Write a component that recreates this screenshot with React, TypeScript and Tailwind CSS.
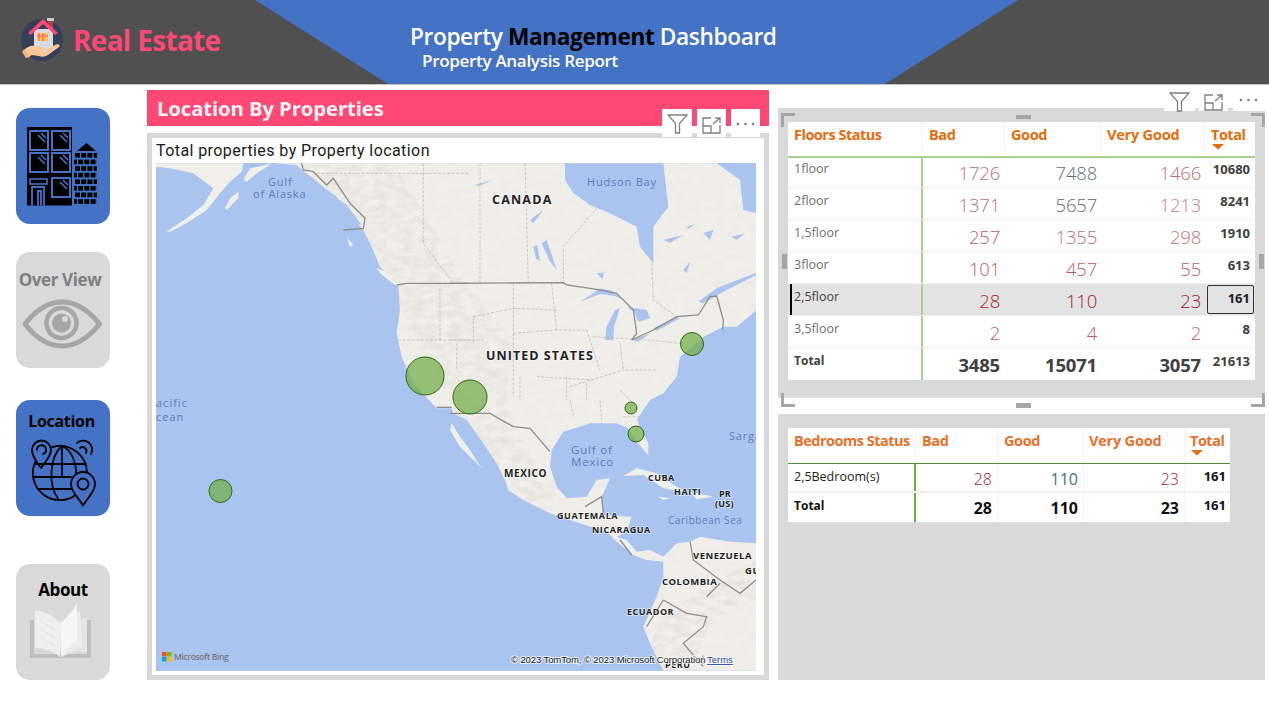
import React from "react";

type P = [number, number];
const at = (ox: number, oy: number, a: P[]) => a.map(([x, y]) => `${x / 3 + ox},${y / 3 + oy}`).join(" ");
const z5 = (a: P[]) => at(150, 130, a);
const z6 = (a: P[]) => at(450, 130, a);
const z7 = (a: P[]) => at(450, 400, a);

const mainland =
  z5([[370,100],[440,105],[470,130],[520,170],[560,200],[600,250],[640,300],[660,340],[690,410],[745,470],[750,540],[740,610],[755,680],[790,760],[860,835],[905,835]]) + " " +
  z7([[10,40],[50,60],[100,130],[140,190],[165,240],[175,270],[220,300],[300,340],[390,370],[470,395],[500,425],[550,465],[590,480],[640,485],[640,530],[620,590],[580,680],[600,730],[640,812],[920,812],[920,430],[840,425],[750,410],[720,425],[680,430],[640,470],[600,450],[560,455],[530,420],[500,410],[530,395],[545,350],[460,345],[455,290],[480,235],[440,240],[410,290],[350,295],[320,260],[300,200],[305,150],[340,95],[420,70],[500,70],[535,85],[560,125],[595,165],[595,130],[560,60],[600,0]]) + " " +
  z6([[640,790],[680,740],[690,680],[760,620],[820,590],[860,590],[920,540],[920,250],[880,240],[870,150],[800,100]]);

const lands = [
  z5([[50,305],[110,265],[160,225],[190,175],[130,130],[60,115],[18,110],[18,100],[280,100],[275,125],[240,155],[210,190],[170,240],[110,280],[60,305]]),
  z5([[225,235],[240,205],[265,185],[265,205],[245,225],[230,240]]),
  z5([[280,150],[300,115],[345,105],[365,100],[345,115],[320,130],[290,155]]),
  z5([[680,415],[720,430],[760,470],[735,465],[690,430]]),
  z5([[590,320],[610,345],[600,350]]),
  z7([[5,70],[30,110],[60,150],[95,205],[70,180],[30,140],[0,90]]),
  z7([[520,228],[560,205],[620,220],[680,260],[720,280],[640,265],[580,225]]),
  z7([[720,275],[790,290],[740,298]]),
  z7([[625,290],[660,295],[640,300]]),
];
const waters = [
  z6([[345,100],[640,100],[655,230],[610,290],[610,400],[570,350],[560,290],[480,250],[420,225],[370,190],[345,150]]),
  z6([[745,515],[800,475],[918,428],[918,436],[830,480],[760,520]]),
  z6([[390,515],[430,490],[450,475],[485,482],[525,512],[495,498],[450,492]]),
  z6([[465,630],[470,590],[495,540],[510,535],[492,590],[490,630]]),
  z6([[530,530],[590,540],[600,565],[565,575],[552,545]]),
  z6([[545,630],[600,610],[615,600],[565,635]]),
  z6([[610,595],[680,560],[690,565],[620,602]]),
  z6([[275,340],[290,330],[320,420],[300,395]]),
  z6([[250,350],[262,345],[270,395],[258,385]]),
  z6([[75,165],[130,150],[85,168]]),
  z6([[240,270],[280,240],[250,280]]),
  z6([[640,330],[700,315],[660,338]]),
  z6([[710,290],[735,282],[715,296]]),
  z6([[760,310],[790,300],[780,330]]),
  z6([[845,320],[885,310],[860,330]]),
  z6([[700,420],[720,395],[710,430]]),
  z6([[440,430],[462,428],[458,448]]),
  z5([[570,210],[590,225],[620,265],[635,285],[600,270]]),
];
const borders = [
  z5([[740,465],[770,460],[960,460]]),
  z6([[0,460],[340,458],[350,465],[440,478],[500,490],[550,540],[560,610],[545,630],[610,600],[680,560],[745,555],[780,500],[800,498],[820,570],[818,600]]),
  z5([[455,100],[460,120],[490,125],[530,165],[550,145],[600,220],[645,265],[640,295],[580,300]]),
  z7([[0,40],[120,40],[190,80],[240,85],[300,155]]),
  z5([[860,832],[905,832]]),
  z7([[405,320],[455,290],[460,340]]),
  z7([[510,420],[545,465]]),
  z7([[720,425],[730,480],[810,540],[870,580],[918,540]]),
  z7([[640,600],[710,640],[770,650],[760,680],[700,730],[760,800]]),
  z7([[590,680],[640,600]]),
  z7([[770,590],[810,550]]),
];
const dashed = [
  z6([[90,100],[90,460]]), z6([[225,100],[235,460]]), z6([[340,460],[340,350],[440,235]]), z6([[605,400],[610,510],[680,560]]),
  z5([[820,100],[820,340],[910,460]]), z5([[500,130],[960,130]]),
  z6([[190,460],[190,800]]), z6([[70,560],[190,535],[320,540]]), z6([[305,460],[320,600],[410,600]]), z6([[190,610],[320,600]]),
  z6([[0,630],[100,630]]), z6([[260,740],[430,750]]), z6([[20,640],[20,720]]), z6([[410,600],[450,720]]),
  z6([[430,620],[590,630],[690,640]]), z6([[510,640],[520,720]]), z6([[360,770],[520,720],[620,720]]),
  z5([[870,460],[870,630]]), z5([[745,630],[960,630]]), z6([[70,560],[70,640]]), z6([[210,740],[210,810]]),
  z6([[350,740],[350,810]]), z6([[410,760],[410,810]]), z6([[510,780],[560,830]]),
  z7([[360,0],[370,50]]), z7([[450,0],[455,60]]), z7([[520,50],[590,50]]),
];
const rockies = "300,165 395,165 470,290 515,340 505,400 525,445 565,505 530,505 462,425 402,310 360,230";
const andes = "640,671 660,620 700,590 756,560 756,600 710,625 690,671";

const MapLabel = ({ x, y, t, c, ls = 0.8, s = 11, b = false }: { x: number; y: number; t: string; c?: boolean; ls?: number; s?: number; b?: boolean }) => (
  <text x={x} y={y} fontFamily="Open Sans, sans-serif" fontSize={s} fontWeight={b ? 700 : 400} letterSpacing={ls} fill={c ? "#5f7cb3" : "#222"} stroke={c ? "none" : "#ffffff"} strokeOpacity={0.55} strokeWidth={c ? 0 : 1.5} paintOrder="stroke">{t}</text>
);

function MapArt() {
  const bubbles: [number, number, number][] = [[425,376,19],[470,397,17],[692,344,11.5],[631,408,6],[636,434,8],[220.5,491,11.5]];
  return (
    <svg className="block w-[600px] h-[508px]" viewBox="156 163 600 508">
      <defs>
        <filter id="tex" x="0" y="0" width="100%" height="100%">
          <feTurbulence type="fractalNoise" baseFrequency="0.08 0.16" numOctaves="3" seed="4" />
          <feColorMatrix values="0 0 0 0 0.62  0 0 0 0 0.6  0 0 0 0 0.56  0.9 0 0 0 -0.3" />
        </filter>
        <filter id="soft"><feGaussianBlur stdDeviation="0.4" /></filter>
        <clipPath id="landclip"><polygon points={mainland} /></clipPath>
        <clipPath id="mtnclip"><polygon points={rockies} /><polygon points={andes} /></clipPath>
      </defs>
      <rect x="156" y="163" width="600" height="508" fill="#a9c5ef" />
      <g filter="url(#soft)">
        <polygon points={mainland} fill="#f1efea" />
        {lands.map((p, i) => <polygon key={i} points={p} fill="#f1efea" />)}
        <g clipPath="url(#landclip)">
          <rect x="156" y="163" width="600" height="508" filter="url(#tex)" opacity="0.18" />
          <g clipPath="url(#mtnclip)">
            <rect x="156" y="163" width="600" height="508" filter="url(#tex)" opacity="0.6" />
          </g>
        </g>
        {waters.map((p, i) => <polygon key={i} points={p} fill="#a9c5ef" />)}
        {dashed.map((p, i) => <polyline key={i} points={p} fill="none" stroke="#bab7b0" strokeWidth="0.7" strokeDasharray="3 1.5" />)}
        {borders.map((p, i) => <polyline key={i} points={p} fill="none" stroke="#8f8e8a" strokeWidth="1.3" />)}
      </g>
      <MapLabel x={268} y={186} t="Gulf" c />
      <MapLabel x={253} y={198} t="of Alaska" c />
      <MapLabel x={587} y={186} t="Hudson Bay" c />
      <MapLabel x={492} y={204} t="CANADA" s={12.5} b ls={1.2} />
      <MapLabel x={486} y={360} t="UNITED STATES" s={12.5} b ls={1.05} />
      <MapLabel x={156} y={407} t="acific" c ls={1} />
      <MapLabel x={156} y={421} t="cean" c ls={1} />
      <MapLabel x={571} y={454} t="Gulf of" c s={11.5} />
      <MapLabel x={571} y={466} t="Mexico" c s={11.5} />
      <MapLabel x={729} y={440} t="Sarga" c />
      <MapLabel x={504} y={477} t="MEXICO" b s={10} ls={0.6} />
      <MapLabel x={648} y={481} t="CUBA" b s={9} ls={0.5} />
      <MapLabel x={674} y={495} t="HAITI" b s={9} ls={0.6} />
      <MapLabel x={719} y={497} t="PR" b s={9} ls={0.2} />
      <MapLabel x={715} y={507} t="(US)" b s={9} ls={0.2} />
      <MapLabel x={668} y={524} t="Caribbean Sea" c s={10} ls={0.55} />
      <MapLabel x={557} y={519} t="GUATEMALA" b s={9} ls={0.6} />
      <MapLabel x={592} y={533} t="NICARAGUA" b s={9} ls={0.55} />
      <MapLabel x={693} y={559} t="VENEZUELA" b s={9.5} ls={0.5} />
      <MapLabel x={745} y={574} t="GU" b s={9.5} ls={0.5} />
      <MapLabel x={662} y={585} t="COLOMBIA" b s={9.5} ls={0.45} />
      <MapLabel x={627} y={615} t="ECUADOR" b s={9} ls={0.5} />
      <MapLabel x={665} y={668} t="PERU" b s={9} ls={0.5} />
      {bubbles.map(([x, y, r], i) => (
        <circle key={i} cx={x} cy={y} r={r} fill="#70ad47" fillOpacity="0.72" stroke="#2c6a12" strokeWidth="1" />
      ))}
      <g>
        <rect x="162" y="652" width="4.500" height="4.500" fill="#f25022" />
        <rect x="167" y="652" width="4.500" height="4.500" fill="#7fba00" />
        <rect x="162" y="657" width="4.500" height="4.500" fill="#00a4ef" />
        <rect x="167" y="657" width="4.500" height="4.500" fill="#ffb900" />
        <text x="174" y="660" fontFamily="Open Sans, sans-serif" fontSize="8.500" fontWeight="600" letterSpacing="-0.35" fill="#777">Microsoft Bing</text>
      </g>
      <text x="511" y="663" fontFamily="Liberation Sans, sans-serif" fontSize="9.500" letterSpacing="-0.1" fill="#222" stroke="#fff" strokeWidth="2" strokeOpacity="0.7" paintOrder="stroke">© 2023 TomTom, © 2023 Microsoft Corporation</text>
      <line x1="703" y1="655" x2="703" y2="664" stroke="#999" strokeWidth="0.7" />
      <text x="707" y="663" fontFamily="Liberation Sans, sans-serif" fontSize="9.500" fill="#2a4db0" textDecoration="underline" stroke="#fff" strokeWidth="2" strokeOpacity="0.6" paintOrder="stroke">Terms</text>
    </svg>
  );
}

function Logo() {
  return (
    <svg className="w-[46px] h-[46px] shrink-0" viewBox="19 17 46 46">
      <circle cx="42" cy="40" r="21" fill="#34405a" />
      <rect x="47" y="18" width="7" height="3" fill="#c9c9c9" />
      <rect x="48" y="21" width="5" height="7" fill="#a5483f" />
      <rect x="34" y="29" width="19" height="22" fill="#d9dbe0" />
      <polygon points="28,33 43,19 58,33 55,35 43,24 31,35" fill="#ff4874" />
      <rect x="37" y="33" width="11" height="8" fill="#ffc34d" />
      <path d="M39 33v8M43 33v8M37 36h11" stroke="#ff4874" strokeWidth="1" fill="none" />
      <path d="M24 50c3-3 7-5 11-4l8 1c3 0 3 3 0 3l-5 0 6 1 11-6c3-2 6 0 4 2l-11 8c-3 2-6 2-9 1l-7-1-6 3z" fill="#fcc79a" />
      <path d="M24 49l6 8-4 1-4-6z" fill="#f3b27e" />
    </svg>
  );
}

function BuildingIcon() {
  const bricks: React.ReactNode[] = [];
  for (let r = 0; r < 8; r++) {
    const y = 153 + r * 6.6;
    const off = r % 2 === 0 ? 0 : -3;
    for (let c = 0; c < 5; c++) {
      const x = 75 + off + c * 6.2;
      const x0 = Math.max(x, 74);
      const x1 = Math.min(x + 5, 97);
      if (x1 > x0) bricks.push(<rect key={`${r}-${c}`} x={x0} y={y} width={x1 - x0} height="4.600" fill="#000" />);
    }
  }
  const win = (x: number, y: number) => (
    <g key={`${x}-${y}`}>
      <rect x={x} y={y} width="18" height="19" fill="#000" stroke="#4472c4" strokeWidth="2" />
      <path d={`M${x + 8} ${y + 4}l7 7M${x + 11} ${y + 2}l5 5`} stroke="#4472c4" strokeWidth="1.600" />
    </g>
  );
  return (
    <svg className="block w-[94px] h-[116px]" viewBox="16 108 94 116">
      <rect x="27" y="127" width="45" height="78.500" fill="#000" />
      {win(30, 131)}{win(52, 131)}{win(30, 153)}{win(52, 153)}{win(52, 178)}
      <rect x="30" y="179" width="17" height="5" fill="#000" stroke="#4472c4" strokeWidth="1.600" />
      <path d="M32 205.500V187h12v18.500M38 205.500V191h3v14.500" stroke="#4472c4" strokeWidth="1.800" fill="none" />
      <polygon points="86.500,143 77,151 96,151" fill="#000" />
      {bricks}
    </svg>
  );
}

function EyeIcon() {
  return (
    <svg className="block w-[94px] h-[78px]" viewBox="16 290 94 78">
      <path d="M25 324Q42 302 62 302Q82 302 99.500 324Q82 346 62 346Q42 346 25 324Z" fill="none" stroke="#a6a6a6" strokeWidth="5" strokeLinejoin="round" />
      <circle cx="61.500" cy="323" r="15" fill="none" stroke="#a6a6a6" strokeWidth="4.500" />
      <circle cx="61.500" cy="323" r="9.500" fill="#a6a6a6" />
      <circle cx="65" cy="319" r="3" fill="#d9d9d9" />
    </svg>
  );
}

function GlobeIcon() {
  return (
    <svg className="block w-[94px] h-[84px]" viewBox="16 432 94 84">
      <g fill="none" stroke="#000" strokeWidth="1.800" strokeLinecap="round" strokeLinejoin="round">
        <path d="M52 447.200A27 27 0 0 1 87 473M36 460.500A27 27 0 0 0 77 494" />
        <path d="M62 446C50 456 47 485 59 500M62 446C72 450 76 463 76 473" />
        <path d="M35 464H86M33 477H71M38 489H74M62 446V475" />
        <path d="M41 468C36 461 32 456 32 450A9.500 9.500 0 0 1 51 450C51 456 46 461 41 468Z" />
        <path d="M37 450A4.500 4.500 0 1 1 43 454" />
        <path d="M77 443A9 9 0 0 1 91 454" />
        <path d="M80 448A4 4 0 0 1 86 453" />
        <path d="M83 505.500C78 497 71 492 71 484A12 12 0 0 1 95 484C95 492 88 497 83 505.500Z" fill="#4472c4" />
        <circle cx="83" cy="484" r="5.500" />
      </g>
    </svg>
  );
}

function BookIcon() {
  return (
    <svg className="block w-[94px] h-[80px]" viewBox="16 600 94 80">
      <path d="M30 620h4v34h53v-34h4v38H30z" fill="#bfbfbf" />
      <path d="M87 617L87 652Q73 651 61 657L80 620Z" fill="#e4e4e4" />
      <path d="M80 610L82 647Q71 650 61 657L74 620Z" fill="#ededed" />
      <path d="M35 610Q50 612 60 623V657Q50 648 35 648Z" fill="#eeeeee" />
      <path d="M60 623Q70 616 77 603V640Q69 645 61 657Z" fill="#f6f6f6" />
      <path d="M41 622Q49 625 55 630M41 630Q49 633 55 638M41 638Q49 641 55 646" stroke="#dedede" strokeWidth="1" fill="none" />
    </svg>
  );
}

const Funnel = () => (
  <svg width="21" height="20" viewBox="0 0 21 20" fill="none" stroke="#808080" strokeWidth="1.300">
    <path d="M1 1h19l-7.500 8.500V19h-4V9.500z" strokeLinejoin="miter" />
  </svg>
);
const Focus = () => (
  <svg width="19" height="17" viewBox="0 0 19 17" fill="none" stroke="#808080" strokeWidth="1.300">
    <path d="M9 1H1v15h17V8M1 9h8v7M11 7l7-6M13 1h5v5" />
  </svg>
);
const Dots = () => (
  <svg width="19" height="6" viewBox="0 0 19 6" fill="#808080"><circle cx="2" cy="3" r="1.300" /><circle cx="9.500" cy="3" r="1.300" /><circle cx="17" cy="3" r="1.300" /></svg>
);
const Caret = () => (
  <svg width="12" height="6" viewBox="0 0 12 6" className="block"><polygon points="0,0 12,0 6,5.500" fill="#e46c0a" /></svg>
);

const rose = "text-[#c05a68]";
const slate = "text-[#5f6f78]";
const grey = "text-[#6a6a6a]";

type Row = { label: string; v: [string, string, string]; c: [string, string, string]; t: string; sel?: boolean };
const floorRows: Row[] = [
  { label: "1floor", v: ["1726", "7488", "1466"], c: ["text-[#b8707a]", slate, "text-[#b8707a]"], t: "10680" },
  { label: "2floor", v: ["1371", "5657", "1213"], c: ["text-[#b8707a]", grey, "text-[#c08088]"], t: "8241" },
  { label: "1,5floor", v: ["257", "1355", "298"], c: [rose, "text-[#b8707a]", "text-[#c0707c]"], t: "1910" },
  { label: "3floor", v: ["101", "457", "55"], c: [rose, rose, rose], t: "613" },
  { label: "2,5floor", v: ["28", "110", "23"], c: ["text-[#a5182e]", "text-[#a5182e]", "text-[#a5182e]"], t: "161", sel: true },
  { label: "3,5floor", v: ["2", "4", "2"], c: [rose, rose, rose], t: "8" },
];
const cellNum = "flex justify-end text-[18.500px] font-light leading-[24px] pr-[4px] tracking-[-0.2px]";

function FloorsTable() {
  const sep = "border-r border-[#f4f4f4]";
  return (
    <div className="w-[467px] bg-white font-['Open_Sans',sans-serif]">
      <div className="flex h-[36px] border-b-2 border-[#a9d08e] text-[14.500px] font-bold text-[#e46c0a] leading-[24px] tracking-[-0.4px]">
        <div className={`w-[135px] pl-[6px] pt-[1px] tracking-[-0.5px] ${sep}`}>Floors Status</div>
        <div className={`w-[82px] pl-[6px] pt-[1px] ${sep}`}>Bad</div>
        <div className={`w-[96px] pl-[6px] pt-[1px] ${sep}`}>Good</div>
        <div className={`w-[104px] pl-[6px] pt-[1px] tracking-[-0.2px] ${sep}`}>Very Good</div>
        <div className="w-[50px] pl-[6px] pt-[1px] tracking-[-0.5px]">
          <div className="h-[21px]">Total</div>
          <div className="ml-[1px]"><Caret /></div>
        </div>
      </div>
      {floorRows.map((r, i) => (
        <div key={r.label} className={`relative flex border-b border-[#f0f0f0] ${i === 0 ? "h-[30px]" : "h-[32px]"} ${r.sel ? "bg-[#e3e3e3]" : ""}`}>
          {r.sel && <div className="absolute left-[2px] top-0 bottom-0 w-[2px] bg-black" />}
          <div className={`w-[135px] border-r-2 border-[#a9d08e] pl-[6px] ${i === 0 ? "pt-[1px]" : "pt-[3px]"} text-[12.500px] leading-[20px] ${r.sel ? "text-[#444]" : "text-[#6e6e6e]"}`}>{r.label}</div>
          <div className={`w-[82px] ${cellNum} ${i === 0 ? "pt-[3px]" : "pt-[5px]"} pr-[5px] ${r.c[0]}`}>{r.v[0]}</div>
          <div className={`w-[96px] ${cellNum} ${i === 0 ? "pt-[3px]" : "pt-[5px]"} ${r.c[1]}`}>{r.v[1]}</div>
          <div className={`w-[104px] ${cellNum} ${i === 0 ? "pt-[3px]" : "pt-[5px]"} ${r.c[2]}`}>{r.v[2]}</div>
          {r.sel ? (
            <div className="ml-[2px] mt-[1px] w-[47px] h-[29px] flex justify-end border border-[#333] rounded-[2px] pr-[3px] pt-[2px] text-[13px] font-bold leading-[20px] text-[#222]">{r.t}</div>
          ) : (
            <div className={`w-[50px] flex justify-end pr-[5px] ${i === 0 ? "pt-[1px]" : "pt-[3px]"} text-[13px] font-bold leading-[20px] text-[#404040]`}>{r.t}</div>
          )}
        </div>
      ))}
      <div className="flex h-[32px]">
        <div className="w-[135px] border-r-2 border-[#a9d08e] pl-[6px] pt-[3px] text-[12px] font-bold leading-[20px] text-[#404040]">Total</div>
        <div className={`w-[82px] ${cellNum} pt-[5px] !font-bold text-[#404040] pr-[5px]`}>3485</div>
        <div className={`w-[96px] ${cellNum} pt-[5px] !font-bold text-[#404040]`}>15071</div>
        <div className={`w-[104px] ${cellNum} pt-[5px] !font-bold text-[#404040]`}>3057</div>
        <div className="w-[50px] flex justify-end pr-[5px] pt-[3px] text-[13px] font-bold leading-[20px] text-[#404040]">21613</div>
      </div>
    </div>
  );
}

function BedroomsTable() {
  const sep = "border-r border-[#f4f4f4]";
  const n = "flex justify-end pr-[5px] pt-[3px] leading-[24px] border-r border-[#f4f4f4] text-[16px]";
  return (
    <div className="w-[442px] bg-white font-['Open_Sans',sans-serif]">
      <div className="flex h-[36px] border-b border-[#4e8f2e] text-[14.500px] font-bold text-[#e8702a] leading-[24px] tracking-[-0.4px]">
        <div className={`w-[128px] pl-[6px] pt-[1px] whitespace-nowrap tracking-[-0.5px] ${sep}`}>Bedrooms Status</div>
        <div className={`w-[82px] pl-[6px] pt-[1px] ${sep}`}>Bad</div>
        <div className={`w-[86px] pl-[6px] pt-[1px] ${sep}`}>Good</div>
        <div className={`w-[101px] pl-[5px] pt-[1px] tracking-[-0.2px] ${sep}`}>Very Good</div>
        <div className="w-[45px] pl-[5px] pt-[1px] tracking-[-0.5px]">
          <div className="h-[21px]">Total</div>
          <div className="ml-[1px]"><Caret /></div>
        </div>
      </div>
      <div className="flex h-[29px] border-b-2 border-[#f0f0f0]">
        <div className="w-[128px] border-r-2 border-[#70ad47] pl-[6px] pt-[3px] text-[12.500px] leading-[20px] text-[#222]">2,5Bedroom(s)</div>
        <div className={`w-[82px] ${n} font-light text-[#a5182e]`}>28</div>
        <div className={`w-[86px] ${n} font-normal text-[#3f7080]`}>110</div>
        <div className={`w-[101px] ${n} font-light text-[#a5182e]`}>23</div>
        <div className="w-[45px] flex justify-end pr-[4px] text-[13px] font-bold leading-[24px] text-[#111]">161</div>
      </div>
      <div className="flex h-[29px]">
        <div className="w-[128px] border-r-2 border-[#70ad47] pl-[6px] pt-[3px] text-[12px] font-bold leading-[20px] text-[#111]">Total</div>
        <div className={`w-[82px] ${n} font-bold text-[#111]`}>28</div>
        <div className={`w-[86px] ${n} font-bold text-[#111]`}>110</div>
        <div className={`w-[101px] ${n} font-bold text-[#111]`}>23</div>
        <div className="w-[45px] flex justify-end pr-[4px] text-[13px] font-bold leading-[24px] text-[#111]">161</div>
      </div>
    </div>
  );
}

const Corner = ({ pos, d }: { pos: string; d: string }) => (
  <svg className={`absolute w-[14px] h-[14px] ${pos}`} viewBox="0 0 14 14"><path d={d} fill="none" stroke="#a6a6a6" strokeWidth="3" /></svg>
);

const navText = "h-[22px] flex items-center justify-center font-bold leading-none";

export default function App() {
  return (
    <div className="w-[1269px] h-[711px] overflow-hidden bg-white flex flex-col font-['Open_Sans',sans-serif]">
      <header className="relative h-[85px] shrink-0 bg-[#505050] border-b border-[#c4c4c4]">
        <div className="absolute inset-x-0 top-0 h-[84px] bg-[#4472c4] [clip-path:polygon(255px_0,1018px_0,885px_84px,388px_84px)]" />
        <div className="relative flex items-center h-[84px]">
          <div className="flex items-center ml-[19px] w-[391px] -mt-[4px]">
            <Logo />
            <span className="ml-[8px] text-[28px] font-bold leading-none text-[#ff4874] tracking-[-0.7px]">Real Estate</span>
          </div>
          <div className="mt-[9px] font-semibold">
            <div className="text-[22.700px] leading-[28px] text-white tracking-[-0.4px] whitespace-nowrap">
              Property <span className="text-black font-bold">Management</span> Dashboard
            </div>
            <div className="ml-[12px] text-[17px] leading-[20px] text-white tracking-[-0.3px]">Property Analysis Report</div>
          </div>
        </div>
      </header>

      <div className="flex flex-1">
        <aside className="w-[147px] shrink-0 pl-[16px] pt-[23px] flex flex-col">
          <div className="w-[94px] h-[116px] rounded-[14px] bg-[#4472c4] overflow-hidden"><BuildingIcon /></div>
          <div className="mt-[28px] w-[94px] h-[116px] rounded-[14px] bg-[#d9d9d9] pt-[16px] overflow-hidden">
            <div className={`${navText} text-[#7f7f7f] text-[17px] tracking-[-0.4px] pr-[6px] whitespace-nowrap`}>Over View</div>
            <EyeIcon />
          </div>
          <div className="mt-[32px] w-[94px] h-[116px] rounded-[14px] bg-[#4472c4] pt-[10px] overflow-hidden">
            <div className={`${navText} text-black text-[16px] tracking-[-0.3px] pr-[3px]`}>Location</div>
            <GlobeIcon />
          </div>
          <div className="mt-[48px] w-[94px] h-[116px] rounded-[14px] bg-[#d9d9d9] pt-[14px] overflow-hidden">
            <div className={`${navText} text-black text-[17px] tracking-[-0.4px]`}>About</div>
            <BookIcon />
          </div>
        </aside>

        <section className="w-[622px] shrink-0 pt-[5px]">
          <div className="h-[36px] bg-[#ff4874] pl-[10px] pt-[1px] flex items-center text-[20.300px] font-bold text-white/95 tracking-[-0.1px]">Location By Properties</div>
          <div className="relative mt-[7px] h-[547px] border-[5px] border-[#d9d9d9] bg-white pl-[4px] pr-[8px]">
            <div className="h-[25px] flex items-center font-['Roboto',sans-serif] text-[16px] text-[#1a1a1a] tracking-[0.42px]">Total properties by Property location</div>
            <MapArt />
            <div className="absolute -top-[29px] right-[4px] flex gap-[5px]">
              <div className="w-[30px] h-[28px] bg-white flex items-center justify-center pt-[2px]"><Funnel /></div>
              <div className="w-[29px] h-[28px] bg-white flex items-center justify-center pt-[4px]"><Focus /></div>
              <div className="w-[29px] h-[28px] bg-white flex items-center justify-center pt-[2px]"><Dots /></div>
            </div>
          </div>
        </section>

        <section className="ml-[9px] w-[487px] shrink-0 pt-[23px]">
          <div className="relative h-[290px] bg-[#d9d9d9] pt-[14px] pl-[10px]">
            <FloorsTable />
            <div className="absolute -top-[23px] right-0 flex gap-[4px]">
              <div className="w-[31px] h-[26px] bg-white flex justify-center pt-[7px]"><Funnel /></div>
              <div className="w-[29px] h-[26px] bg-white flex justify-center pt-[9px]"><Focus /></div>
              <div className="w-[32px] h-[26px] bg-white flex justify-center pt-[12px] pr-[1px] ml-[1px]"><Dots /></div>
            </div>
            <Corner pos="left-[3px] top-[5px]" d="M1.500 14V1.500H14" />
            <Corner pos="right-0 top-[5px]" d="M0 1.500H12.500V14" />
            <Corner pos="left-[3px] top-[285px]" d="M1.500 0V12.500H14" />
            <Corner pos="right-0 top-[285px]" d="M0 12.500H12.500V0" />
            <div className="absolute left-[238px] top-[7px] w-[15px] h-[4px] bg-[#a6a6a6]" />
            <div className="absolute left-[238px] top-[295px] w-[15px] h-[5px] bg-[#a6a6a6]" />
            <div className="absolute left-[4px] top-[146px] w-[5px] h-[15px] bg-[#a6a6a6]" />
            <div className="absolute right-[1px] top-[146px] w-[5px] h-[15px] bg-[#a6a6a6]" />
          </div>
          <div className="mt-[16px] h-[266px] bg-[#d9d9d9] pt-[14px] pl-[10px]">
            <BedroomsTable />
          </div>
        </section>
      </div>
    </div>
  );
}
